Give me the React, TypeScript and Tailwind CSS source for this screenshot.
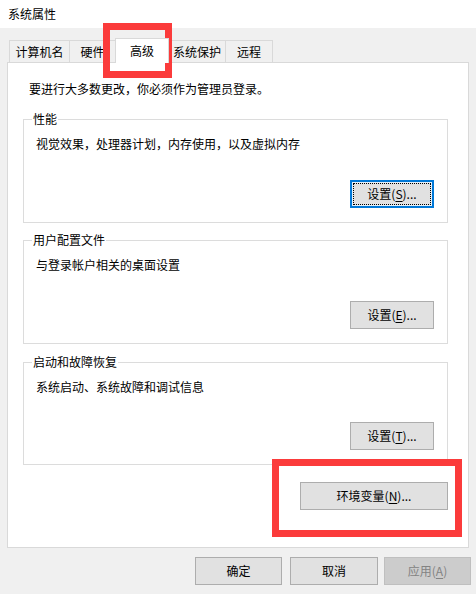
import React from 'react';

const font = { fontFamily: '"Noto Sans CJK SC", "Noto Sans", sans-serif' };

function Btn({
  children,
  width = 'w-[84px]',
  focused = false,
  disabled = false,
}: {
  children: React.ReactNode;
  width?: string;
  focused?: boolean;
  disabled?: boolean;
}) {
  if (focused) {
    return (
      <div className={`${width} h-[28px] border-2 border-[#0078d7] bg-[#e5f1fb] p-px`}>
        <div className="h-full w-full border border-dotted border-black bg-[#e1e1e1] flex items-center justify-center leading-[16px]">
          {children}
        </div>
      </div>
    );
  }
  return (
    <div
      className={`${width} h-[28px] border flex items-center justify-center leading-[16px] ${
        disabled ? 'bg-[#cccccc] border-[#bfbfbf] text-[#838383]' : 'bg-[#e1e1e1] border-[#adadad]'
      }`}
    >
      {children}
    </div>
  );
}

function Group({
  title,
  text,
  height,
  children,
}: {
  title: string;
  text: string;
  height: string;
  children: React.ReactNode;
}) {
  return (
    <div className={`relative ml-[15px] w-[425px] ${height} border border-[#dcdcdc] flex flex-col justify-between pt-[16px] pl-[12px] pr-[13px] pb-[14px]`}>
      <span className="absolute -top-[9px] left-[8px] bg-white px-px leading-[16px]">{title}</span>
      <div className="leading-[16px]">{text}</div>
      <div className="self-end">{children}</div>
    </div>
  );
}

const U = ({ c }: { c: string }) => <span className="underline underline-offset-2">{c}</span>;

export default function App() {
  const tab = 'h-[22px] -ml-px border border-b-0 border-[#d9d9d9] bg-[#f0f0f0] flex items-center justify-center leading-[16px]';
  return (
    <div className="relative w-[476px] h-[594px] bg-[#f0f0f0] overflow-hidden text-[12px] text-black" style={font}>
      {/* Title bar */}
      <div className="h-[28px] bg-white flex items-center pl-[8px] leading-[16px]">系统属性</div>

      <div className="px-[7px]">
        {/* Tabs */}
        <div className="h-[34px] flex items-end pl-[3px]">
          <div className={`${tab} w-[61px]`}>计算机名</div>
          <div className={`${tab} w-[47px]`}>硬件</div>
          <div className="relative z-10 -ml-px -mb-px h-[25px] w-[54px] border border-b-0 border-[#d9d9d9] bg-white flex items-start justify-center pt-[4px] leading-[16px]">
            高级
          </div>
          <div className={`${tab} w-[58px]`}>系统保护</div>
          <div className={`${tab} w-[48px]`}>远程</div>
        </div>

        {/* Panel */}
        <div className="h-[486px] border border-[#d9d9d9] bg-white pt-[18px]">
          <div className="pl-[21px] leading-[16px]">要进行大多数更改，你必须作为管理员登录。</div>

          <div className="mt-[22px]">
            <Group title="性能" text="视觉效果，处理器计划，内存使用，以及虚拟内存" height="h-[104px]">
              <Btn focused>
                设置(<U c="S" />)...
              </Btn>
            </Group>
          </div>

          <div className="mt-[17px]">
            <Group title="用户配置文件" text="与登录帐户相关的桌面设置" height="h-[104px]">
              <Btn>
                设置(<U c="E" />)...
              </Btn>
            </Group>
          </div>

          <div className="mt-[18px]">
            <Group title="启动和故障恢复" text="系统启动、系统故障和调试信息" height="h-[103px]">
              <Btn>
                设置(<U c="T" />)...
              </Btn>
            </Group>
          </div>

          <div className="mt-[17px] flex justify-end pr-[20px]">
            <Btn width="w-[148px]">
              环境变量(<U c="N" />)...
            </Btn>
          </div>
        </div>
      </div>

      {/* Dialog buttons */}
      <div className="mt-[9px] flex justify-end pr-[5px]">
        <Btn width="w-[87px]">确定</Btn>
        <div className="w-[8px]" />
        <Btn width="w-[88px]">取消</Btn>
        <div className="w-[6px]" />
        <Btn width="w-[87px]" disabled>
          应用(<U c="A" />)
        </Btn>
      </div>

      {/* Red annotation boxes */}
      <div className="absolute left-[103px] top-[23px] w-[69px] h-[55px] border-[7px] border-[#fb3b3b]" />
      <div className="absolute left-[272px] top-[459px] w-[190px] h-[78px] border-[7px] border-[#fb3b3b]" />
    </div>
  );
}
